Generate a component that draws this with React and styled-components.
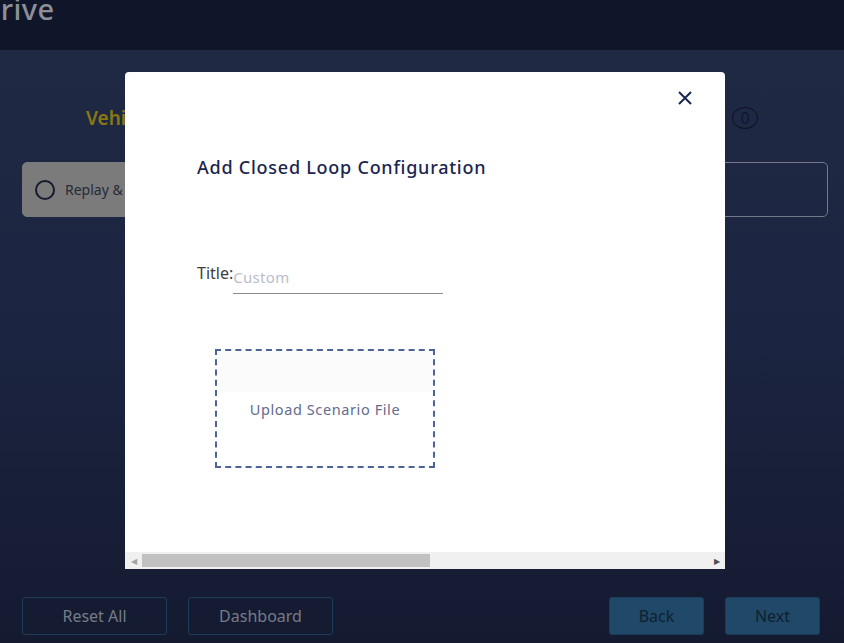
import React from 'react';
import styled, { createGlobalStyle } from 'styled-components';

const GlobalStyle = createGlobalStyle`
  html, body {
    margin: 0;
    padding: 0;
    height: 100%;
    overflow: hidden;
  }
  body {
    font-family: "Noto Sans", "Open Sans", sans-serif;
  }
`;

const Page = styled.div`
  position: relative;
  width: 844px;
  height: 643px;
  display: flex;
  flex-direction: column;
  background: #11172b;
  overflow: hidden;
`;

const Header = styled.div`
  height: 50px;
  flex-shrink: 0;
  background: #10162a;
  display: flex;
  align-items: flex-start;
`;

const Brand = styled.div`
  margin-left: -21px;
  margin-top: -11px;
  font-size: 29px;
  font-weight: 500;
  letter-spacing: 0.5px;
  color: #8e9096;
`;

const Body = styled.div`
  flex: 1;
  display: flex;
  flex-direction: column;
  padding: 0 16px 0 22px;
  background: linear-gradient(180deg, #1f2944 0%, #1b2440 50%, #141a30 100%);
`;

const StepRow = styled.div`
  display: flex;
  justify-content: space-between;
  align-items: center;
  height: 36px;
  margin-top: 50px;
  padding: 0 70px 0 64px;
`;

const StepTitle = styled.div`
  font-size: 19px;
  font-weight: 600;
  color: #8a7712;
`;

const Count = styled.div`
  width: 24px;
  height: 20px;
  border: 1px solid #0f1426;
  border-radius: 50%;
  color: #10162a;
  font-size: 16px;
  text-align: center;
  line-height: 20px;
`;

const Options = styled.div`
  display: flex;
  gap: 16px;
  margin-top: 26px;
`;

const Option = styled.div`
  flex: 1;
  height: 55px;
  border-radius: 5px;
  display: flex;
  align-items: center;
  gap: 10px;
  padding-left: 12px;
  box-sizing: border-box;
  background: ${p => (p.$selected ? 'linear-gradient(90deg, #7b7b7b 0%, #7b7b7b 60%, #6a6a6a 100%)' : 'transparent')};
  border: 1px solid ${p => (p.$selected ? '#7b7b7b' : '#767a86')};
  color: #262a36;
  font-size: 14px;
`;

const Radio = styled.span`
  width: 16px;
  height: 16px;
  border: 2px solid #151a2c;
  border-radius: 50%;
`;

const Footer = styled.div`
  margin-top: auto;
  margin-bottom: 8px;
  margin-right: 8px;
  display: flex;
  align-items: center;
  gap: 21px;
`;

const Spacer = styled.div`
  flex: 1;
`;

const FooterButton = styled.button`
  width: ${p => p.$w}px;
  height: 38px;
  border-radius: 3px;
  font-family: "Noto Sans", sans-serif;
  font-size: 16px;
  cursor: pointer;
  border: 1px solid #1d3c5a;
  background: ${p => (p.$filled ? '#1f4869' : 'transparent')};
  color: ${p => (p.$filled ? '#10202f' : '#767b85')};
`;

const Modal = styled.div`
  position: absolute;
  left: 125px;
  top: 72px;
  width: 600px;
  height: 497px;
  background: #ffffff;
  border-radius: 4px 4px 0 0;
  display: flex;
  flex-direction: column;
  overflow: hidden;
`;

const ModalContent = styled.div`
  flex: 1;
  position: relative;
  padding: 83px 0 0 72px;
  font-family: "Noto Sans", sans-serif;
`;

const CloseButton = styled.button`
  position: absolute;
  top: 17px;
  right: 31px;
  width: 18px;
  height: 18px;
  padding: 0;
  border: none;
  background: none;
  cursor: pointer;
  display: flex;
`;

const ModalTitle = styled.h2`
  margin: 0;
  font-size: 18px;
  font-weight: 500;
  color: #1a2550;
  letter-spacing: 0.75px;
`;

const Field = styled.div`
  display: flex;
  align-items: flex-start;
  margin-top: 84px;
`;

const Label = styled.label`
  font-size: 16px;
  color: #3e3e3e;
  line-height: 20px;
`;

const Input = styled.input`
  width: 210px;
  margin-top: 4px;
  border: none;
  border-bottom: 1px solid #8c8c8c;
  padding: 0 0 6px;
  font-family: "Noto Sans", sans-serif;
  font-size: 15px;
  letter-spacing: 0.3px;
  color: #333;
  outline: none;
  &::placeholder {
    color: #b9bdca;
  }
`;

const Upload = styled.div`
  margin: 55px 0 0 18px;
  width: 220px;
  height: 119px;
  box-sizing: border-box;
  border: 2px dashed #4c6397;
  display: flex;
  align-items: center;
  justify-content: center;
  background: linear-gradient(180deg, #fbfbfb 0%, #fbfbfb 36%, #ffffff 36%);
  font-size: 14.5px;
  color: #636c8d;
  letter-spacing: 0.6px;
`;

const ScrollBar = styled.div`
  height: 17px;
  flex-shrink: 0;
  background: #f0f0f0;
  display: flex;
  align-items: center;
`;

const ScrollArrow = styled.span`
  width: 17px;
  display: flex;
  justify-content: center;
  color: ${p => (p.$dim ? '#a3a3a3' : '#505050')};
  font-size: 8px;
`;

const ScrollTrack = styled.div`
  flex: 1;
  height: 13px;
  display: flex;
`;

const Thumb = styled.div`
  width: 288px;
  height: 100%;
  background: #c1c1c1;
`;

export default function App() {
  return (
    <Page>
      <GlobalStyle />
      <Header>
        <Brand>Drive</Brand>
      </Header>
      <Body>
        <StepRow>
          <StepTitle>Vehicle</StepTitle>
          <Count>0</Count>
        </StepRow>
        <Options>
          <Option $selected>
            <Radio />
            Replay &amp; Resimulation
          </Option>
          <Option />
        </Options>
        <Footer>
          <FooterButton $w={145}>Reset All</FooterButton>
          <FooterButton $w={145}>Dashboard</FooterButton>
          <Spacer />
          <FooterButton $w={95} $filled>Back</FooterButton>
          <FooterButton $w={95} $filled>Next</FooterButton>
        </Footer>
      </Body>

      <Modal>
        <ModalContent>
          <CloseButton aria-label="close">
            <svg width="18" height="18" viewBox="0 0 18 18">
              <path d="M3 3 L15 15 M15 3 L3 15" stroke="#1a2550" strokeWidth="2" />
            </svg>
          </CloseButton>
          <ModalTitle>Add Closed Loop Configuration</ModalTitle>
          <Field>
            <Label>Title:</Label>
            <Input placeholder="Custom" />
          </Field>
          <Upload>Upload Scenario File</Upload>
        </ModalContent>
        <ScrollBar>
          <ScrollArrow $dim>◀</ScrollArrow>
          <ScrollTrack>
            <Thumb />
          </ScrollTrack>
          <ScrollArrow>▶</ScrollArrow>
        </ScrollBar>
      </Modal>
    </Page>
  );
}
